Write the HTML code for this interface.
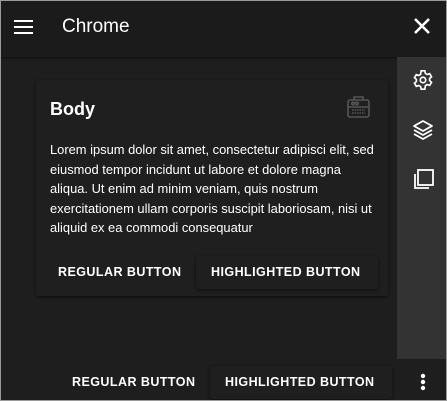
<!DOCTYPE html>
<html><head><style>
*{margin:0;padding:0;box-sizing:border-box}
body{width:447px;height:401px;background:#1e1e1e;font-family:"Liberation Sans",sans-serif;color:#fff;position:relative;overflow:hidden}
.frame{position:absolute;inset:0;border:1px solid #9a9a9a;pointer-events:none;z-index:5}
.hdr{position:absolute;left:0;top:0;width:447px;height:57px;background:#1b1b1b;box-shadow:0 1px 3px rgba(0,0,0,.5)}
.side{position:absolute;left:397px;top:57px;width:50px;height:302px;background:#333}
.card{position:absolute;left:36px;top:80px;width:352px;height:216px;background:#1f1f1f;box-shadow:0 1px 3px rgba(0,0,0,.6);border-radius:3px}
.btn{position:absolute;font-weight:bold;font-size:12.5px;letter-spacing:.45px;white-space:nowrap}
.hl{background:#1f1f1f;box-shadow:0 1px 3px rgba(0,0,0,.6);border-radius:3px}
</style></head><body>
<div class="hdr">
<svg style="position:absolute;left:14px;top:20px" width="19" height="14"><rect y="0" width="19" height="2" fill="#fff"/><rect y="6" width="19" height="2" fill="#fff"/><rect y="12" width="19" height="2" fill="#fff"/></svg>
<div style="position:absolute;left:62px;top:16px;font-size:19px">Chrome</div>
<svg style="position:absolute;left:414px;top:18px" width="16" height="16"><path d="M1 1L15 15M15 1L1 15" stroke="#fff" stroke-width="2.6"/></svg>
</div>
<div class="side">
<svg style="position:absolute;left:15px;top:12px" width="22" height="22" viewBox="0 0 24 24" fill="none" stroke="#fff" stroke-width="1.8"><circle cx="12" cy="12" r="3"/><path d="M10 2h4l.6 2.8 2 1.2 2.7-.9 2 3.4-2.1 1.9v2.2l2.1 1.9-2 3.4-2.7-.9-2 1.2L14 22h-4l-.6-2.8-2-1.2-2.7.9-2-3.4 2.1-1.900v-2.2L2.7 9.5l2-3.4 2.7.9 2-1.2z"/></svg>
<svg style="position:absolute;left:14px;top:61px" width="24" height="24" viewBox="0 0 24 24" fill="none" stroke="#fff" stroke-width="1.8" stroke-linejoin="round"><path d="M12 3l9 5-9 5-9-5z"/><path d="M3 12l9 5 9-5"/><path d="M3 16l9 5 9-5"/></svg>
<svg style="position:absolute;left:15px;top:112px" width="22" height="22" viewBox="0 0 22 22" fill="none" stroke="#fff" stroke-width="1.8"><rect x="6" y="1" width="15" height="15"/><path d="M3 5v14h14"/></svg>
</div>
<div class="card">
<div style="position:absolute;left:14px;top:19px;font-size:18px;font-weight:bold">Body</div>
<svg style="position:absolute;left:311px;top:16px" width="23" height="23" viewBox="0 0 23 23" fill="none" stroke="#555" stroke-width="1.6"><rect x="1" y="4" width="21" height="17" rx="2"/><path d="M7 4V1h9v3M1 11h21"/><circle cx="6" cy="7.5" r="1.3"/><circle cx="10" cy="7.5" r="1.3"/><path d="M5 14h13M5 17h13" stroke-dasharray="1.5 1"/></svg>
<div style="position:absolute;left:14px;top:60px;font-size:12.9px;line-height:19.5px;white-space:nowrap">Lorem ipsum dolor sit amet, consectetur adipisci elit, sed<br>eiusmod tempor incidunt ut labore et dolore magna<br>aliqua. Ut enim ad minim veniam, quis nostrum<br>exercitationem ullam corporis suscipit laboriosam, nisi ut<br>aliquid ex ea commodi consequatur</div>
<div class="btn" style="left:22px;top:185px">REGULAR BUTTON</div>
<div class="btn hl" style="left:160px;top:176px;width:182px;height:33px;padding:9px 0 0 15px">HIGHLIGHTED BUTTON</div>
</div>
<div class="btn" style="left:72px;top:375px">REGULAR BUTTON</div>
<div class="btn hl" style="left:210px;top:366px;width:182px;height:33px;padding:9px 0 0 15px">HIGHLIGHTED BUTTON</div>
<svg style="position:absolute;left:420px;top:373px" width="6" height="18"><circle cx="3" cy="3" r="2.2" fill="#fff"/><circle cx="3" cy="9" r="2.2" fill="#fff"/><circle cx="3" cy="15" r="2.2" fill="#fff"/></svg>
<div class="frame"></div>
</body></html>
